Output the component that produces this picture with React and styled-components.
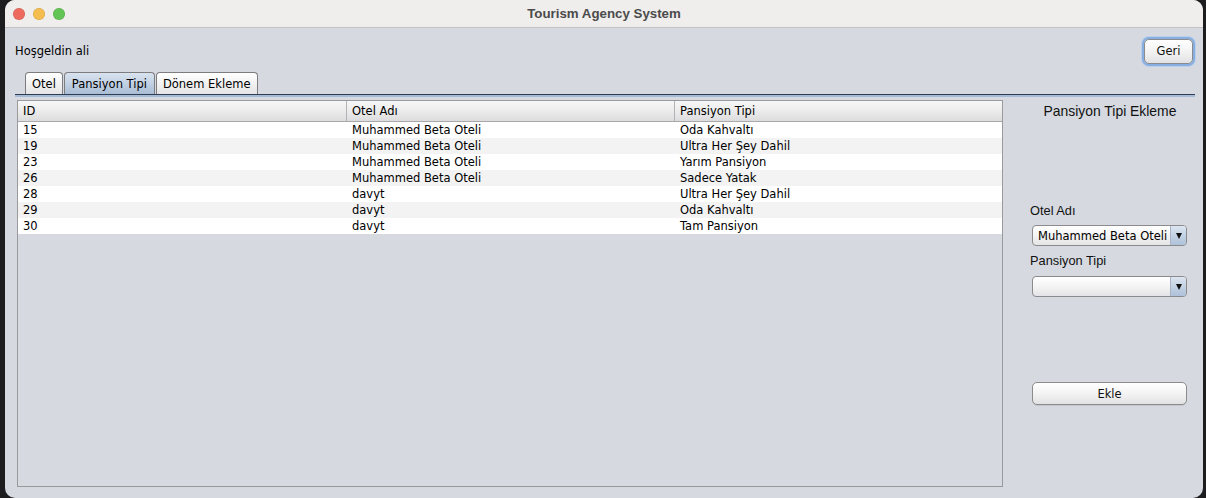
import React from "react";
import styled, { createGlobalStyle } from "styled-components";

const GlobalStyle = createGlobalStyle`
  html, body {
    margin: 0;
    padding: 0;
    background: #1d1d1f;
  }
  body {
    font-family: "DejaVu Sans", "Liberation Sans", sans-serif;
    font-size: 11.5px;
    color: #000;
  }
`;

const Window = styled.div`
  margin-left: 5px;
  width: 1198px;
  height: 498px;
  background: #d6d9e0;
  border-radius: 10px;
  overflow: hidden;
  display: flex;
  flex-direction: column;
`;

const TitleBar = styled.div`
  height: 27px;
  flex-shrink: 0;
  background: #efeeec;
  border-bottom: 1px solid #c2c2c4;
  display: flex;
  align-items: center;
`;

const Lights = styled.div`
  display: flex;
  gap: 8px;
  padding-left: 8px;
  width: 52px;
`;

const Light = styled.span`
  width: 12px;
  height: 12px;
  border-radius: 50%;
  background: ${(p) => p.color};
  box-shadow: inset 0 0 0 0.5px rgba(0, 0, 0, 0.15);
`;

const Title = styled.div`
  flex: 1;
  text-align: center;
  margin-right: 60px;
  font-family: "Liberation Sans", Arial, sans-serif;
  font-weight: bold;
  font-size: 13.3px;
  color: #4b4b4b;
`;

const Content = styled.div`
  flex: 1;
  display: flex;
  flex-direction: column;
  padding: 10px 8px 0 10px;
`;

const Header = styled.div`
  height: 25px;
  display: flex;
  align-items: center;
  justify-content: space-between;
`;

const Welcome = styled.span``;

const Button = styled.button`
  font-family: "DejaVu Sans", sans-serif;
  font-size: 11.5px;
  color: #111;
  height: ${(p) => p.h || 23}px;
  width: ${(p) => (p.w ? `${p.w}px` : "auto")};
  padding: 0;
  border: 1px solid #8b8b8b;
  border-radius: 5px;
  background: linear-gradient(#ffffff, #f3f3f3 50%, #e2e2e4);
  box-shadow: ${(p) =>
    p.focused ? "0 0 0 2px #86aee0, 0 0 0 3px #b9cfeb" : "0 1px 0 rgba(0,0,0,0.08)"};
`;

const GeriButton = styled(Button)`
  margin-right: 2px;
  margin-top: 1px;
`;

const Tabs = styled.div`
  display: flex;
  margin-top: 9px;
  padding-left: 10px;
  height: 22px;
`;

const Tab = styled.div`
  padding: 0 ${(p) => (p.active ? 7 : 6)}px;
  display: flex;
  align-items: center;
  border: 1px solid #7d7d7f;
  border-bottom: none;
  border-radius: 4px 4px 0 0;
  margin-right: 1px;
  background: ${(p) =>
    p.active
      ? "linear-gradient(#d9e3ef, #c2d1e3 50%, #a9bdd5)"
      : "linear-gradient(#ffffff, #f2f2f2 50%, #e4e4e6)"};
`;

const TabLine = styled.div`
  height: 1px;
  background: #2e3f55;
  border-bottom: 2px solid #a6bad5;
`;

const Body = styled.div`
  display: flex;
  margin-top: 3px;
  flex: 1;
  padding-bottom: 11px;
`;

const Table = styled.div`
  margin-left: 2px;
  width: 984px;
  border: 1px solid #9a9a9c;
  display: flex;
  flex-direction: column;
`;

const HeadRow = styled.div`
  display: grid;
  grid-template-columns: 328px 328px 1fr;
  height: 20px;
  border-bottom: 1px solid #a9a9ab;
  background: linear-gradient(#f7f7f7, #ececec 50%, #dcdcde);
`;

const HeadCell = styled.div`
  padding-left: 5px;
  display: flex;
  align-items: center;
  border-left: ${(p) => (p.first ? "none" : "1px solid #b3b3b5")};
`;

const Row = styled.div`
  display: grid;
  grid-template-columns: 328px 328px 1fr;
  height: 16px;
  background: ${(p) => (p.odd ? "#f3f3f3" : "#ffffff")};
`;

const Cell = styled.div`
  padding-left: ${(p) => (p.first ? 5 : 6)}px;
  display: flex;
  align-items: center;
  white-space: nowrap;
`;

const Side = styled.div`
  flex: 1;
  display: flex;
  flex-direction: column;
  padding-left: 27px;
  padding-right: 5px;
`;

const SideTitle = styled.div`
  margin-top: 3px;
  line-height: 16px;
  text-align: center;
  font-family: "Liberation Sans", Arial, sans-serif;
  font-size: 13.9px;
  color: #111;
`;

const Label = styled.div`
  margin-top: ${(p) => p.mt}px;
  line-height: 16px;
  font-family: "Liberation Sans", Arial, sans-serif;
  font-size: 12.8px;
  color: #111;
`;

const Combo = styled.div`
  margin-top: ${(p) => p.mt}px;
  margin-left: 2px;
  width: 155px;
  height: 21px;
  box-sizing: border-box;
  border: 1px solid #8b8b8d;
  border-radius: 4px;
  background: linear-gradient(#ffffff, #f4f4f4 50%, #e4e4e6);
  display: flex;
  overflow: hidden;
`;

const ComboText = styled.div`
  flex: 1;
  padding-left: 5px;
  display: flex;
  align-items: center;
  white-space: nowrap;
  overflow: hidden;
`;

const ComboArrow = styled.div`
  width: 15px;
  border-left: 1px solid #a8b4c4;
  background: linear-gradient(#dde6f1, #c3d2e4 50%, #afc2da);
  display: flex;
  align-items: center;
  justify-content: center;
  &::after {
    content: "";
    border-left: 3.5px solid transparent;
    border-right: 3.5px solid transparent;
    border-top: 6px solid #111;
  }
`;

const EkleButton = styled(Button)`
  margin-top: 85px;
  margin-left: 2px;
`;

const rows = [
  ["15", "Muhammed Beta Oteli", "Oda Kahvaltı"],
  ["19", "Muhammed Beta Oteli", "Ultra Her Şey Dahil"],
  ["23", "Muhammed Beta Oteli", "Yarım Pansiyon"],
  ["26", "Muhammed Beta Oteli", "Sadece Yatak"],
  ["28", "davyt", "Ultra Her Şey Dahil"],
  ["29", "davyt", "Oda Kahvaltı"],
  ["30", "davyt", "Tam Pansiyon"],
];

export default function App() {
  return (
    <>
      <GlobalStyle />
      <Window>
        <TitleBar>
          <Lights>
            <Light color="#ee6a5f" />
            <Light color="#f5bd4f" />
            <Light color="#61c454" />
          </Lights>
          <Title>Tourism Agency System</Title>
        </TitleBar>
        <Content>
          <Header>
            <Welcome>Hoşgeldin ali</Welcome>
            <GeriButton focused w={49} h={25}>
              Geri
            </GeriButton>
          </Header>
          <Tabs>
            <Tab>Otel</Tab>
            <Tab active>Pansiyon Tipi</Tab>
            <Tab>Dönem Ekleme</Tab>
          </Tabs>
          <TabLine />
          <Body>
            <Table>
              <HeadRow>
                <HeadCell first>ID</HeadCell>
                <HeadCell>Otel Adı</HeadCell>
                <HeadCell>Pansiyon Tipi</HeadCell>
              </HeadRow>
              {rows.map((r, i) => (
                <Row key={r[0]} odd={i % 2 === 1}>
                  <Cell first>{r[0]}</Cell>
                  <Cell>{r[1]}</Cell>
                  <Cell>{r[2]}</Cell>
                </Row>
              ))}
            </Table>
            <Side>
              <SideTitle>Pansiyon Tipi Ekleme</SideTitle>
              <Label mt={84}>Otel Adı</Label>
              <Combo mt={6}>
                <ComboText>Muhammed Beta Oteli</ComboText>
                <ComboArrow />
              </Combo>
              <Label mt={7}>Pansiyon Tipi</Label>
              <Combo mt={7}>
                <ComboText />
                <ComboArrow />
              </Combo>
              <EkleButton w={155}>Ekle</EkleButton>
            </Side>
          </Body>
        </Content>
      </Window>
    </>
  );
}
